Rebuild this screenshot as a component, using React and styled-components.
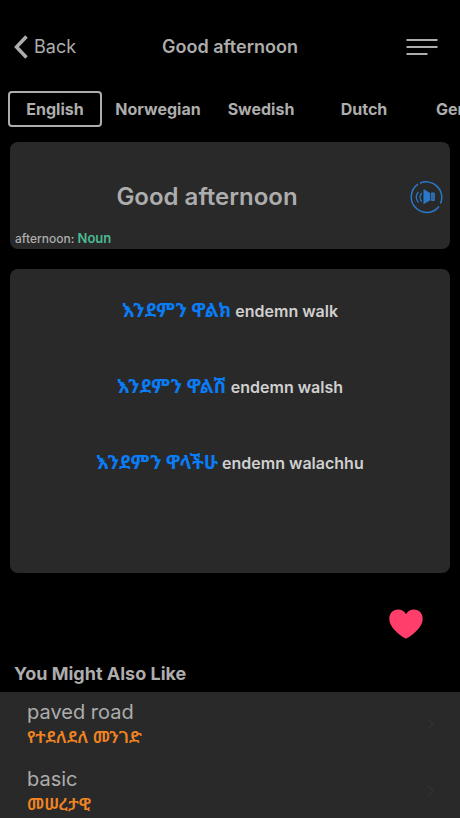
import React, { useState } from "react"
import styled, { createGlobalStyle } from "styled-components"

const languages = ["English", "Norwegian", "Swedish", "Dutch", "German"]

const phrases = [
  { amharic: "እንደምን ዋልክ", latin: "endemn walk" },
  { amharic: "እንደምን ዋልሽ", latin: "endemn walsh" },
  { amharic: "እንደምን ዋላችሁ", latin: "endemn walachhu" },
]

const suggestions = [
  { word: "paved road", amharic: "የተደለደለ መንገድ" },
  { word: "basic", amharic: "መሠረታዊ" },
]

const App = () => {
  const [language, setLanguage] = useState("English")

  return (
    <>
      <GlobalStyle />
      <Screen>
        <Header>
          <BackButton type="button">
            <svg width="14" height="24" viewBox="0 0 14 24" fill="none" aria-hidden="true">
              <path d="M12.500 1.500L2.500 12l10 10.500" stroke="currentColor" strokeWidth="3.500" />
            </svg>
            Back
          </BackButton>
          <HeaderTitle>Good afternoon</HeaderTitle>
          <MenuButton type="button" aria-label="Menu">
            <svg width="32" height="18" viewBox="0 0 32 18" aria-hidden="true">
              <path d="M0.500 2h31M0.500 9h31M0.500 16h21" stroke="currentColor" strokeWidth="2" />
            </svg>
          </MenuButton>
        </Header>

        <Languages>
          {languages.map((item) => (
            <LanguageTab
              key={item}
              type="button"
              $active={item === language}
              aria-pressed={item === language}
              onClick={() => setLanguage(item)}
            >
              {item}
            </LanguageTab>
          ))}
        </Languages>

        <WordCard>
          <WordRow>
            <Word>Good afternoon</Word>
            <SoundButton type="button" aria-label="Listen">
              <svg width="34" height="34" viewBox="0 0 34 34" fill="none" aria-hidden="true">
                <g stroke="currentColor">
                  <path d="M11 3.200A15.500 15.500 0 0 1 31.500 23.500M30 26.500A15.500 15.500 0 1 1 9 4.200" strokeWidth="1.500" />
                  <path d="M9.500 12C6.500 14.500 6.500 19.500 9.500 22.500" strokeWidth="1.300" />
                  <path d="M12.800 13C10.500 15.500 10.500 19 12.800 21.500" strokeWidth="1.300" />
                </g>
                <path d="M14.500 9L21 13V20.500L14.500 24.300z" fill="currentColor" />
                <path d="M22.300 13h3v7.500h-3z" fill="currentColor" fillOpacity="0.800" stroke="currentColor" />
              </svg>
            </SoundButton>
          </WordRow>
          <WordType>
            afternoon: <Noun>Noun</Noun>
          </WordType>
        </WordCard>

        <PhraseCard>
          {phrases.map((item) => (
            <Phrase key={item.latin}>
              <Amharic lang="am">{item.amharic}</Amharic> {item.latin}
            </Phrase>
          ))}
        </PhraseCard>

        <Actions>
          <LikeButton type="button" aria-label="Favourite">
            <svg width="34" height="30" viewBox="0 0 34 30" aria-hidden="true">
              <path
                d="M17 29.500C15.500 29.500 0.300 20 0.300 9.700C0.300 4.300 4.100 0.500 9 0.500C12.600 0.500 15.500 2.400 17 5.200C18.500 2.400 21.400 0.500 25 0.500C29.900 0.500 33.700 4.300 33.700 9.700C33.700 20 18.500 29.500 17 29.500z"
                fill="currentColor"
              />
            </svg>
          </LikeButton>
        </Actions>

        <SectionTitle>You Might Also Like</SectionTitle>
        <List>
          {suggestions.map((item) => (
            <ListItem key={item.word}>
              <ListLink href="#">
                <div>
                  <ListWord>{item.word}</ListWord>
                  <ListAmharic lang="am">{item.amharic}</ListAmharic>
                </div>
                <svg width="7" height="12" viewBox="0 0 7 12" fill="none" aria-hidden="true">
                  <path d="M1 1l5 5-5 5" stroke="#313132" strokeWidth="1.500" />
                </svg>
              </ListLink>
            </ListItem>
          ))}
        </List>
      </Screen>
    </>
  )
}

export default App

const GlobalStyle = createGlobalStyle`
  * {
    box-sizing: border-box;
  }

  body {
    margin: 0;
    background: #000;
    color: #adadad;
    font-family: Inter, "Noto Sans Ethiopic", "Abyssinica SIL", "Noto Sans", sans-serif;
  }

  button {
    padding: 0;
    border: none;
    background: none;
    color: inherit;
    font: inherit;
    cursor: pointer;
  }

  svg {
    display: block;
  }
`

const Screen = styled.main`
  height: 100vh;
  display: flex;
  flex-direction: column;
  overflow: hidden;
`

const Header = styled.header`
  display: grid;
  grid-template-columns: 1fr auto 1fr;
  align-items: center;
  padding: 32px 14px 0;
  line-height: 30px;
`

const BackButton = styled.button`
  display: flex;
  align-items: center;
  justify-self: start;
  gap: 6px;
  font-size: 18px;
`

const HeaderTitle = styled.h1`
  margin: 0;
  font-size: 18px;
  font-weight: 600;
`

const MenuButton = styled.button`
  justify-self: end;
  padding-right: 8px;
`

const Languages = styled.nav`
  flex-shrink: 0;
  display: flex;
  gap: 9px;
  margin-top: 29px;
  padding-left: 8px;
  overflow-x: auto;
  scrollbar-width: none;
`

const LanguageTab = styled.button`
  flex: 0 0 94px;
  height: 36px;
  border: 2px solid ${({ $active }) => ($active ? "#adadad" : "transparent")};
  border-radius: 4px;
  font-size: 16px;
  font-weight: 700;
  display: flex;
  align-items: center;
  justify-content: center;
`

const Card = styled.section`
  flex-shrink: 0;
  margin: 0 10px;
  border-radius: 8px;
  background: #292929;
`

const WordCard = styled(Card)`
  margin-top: 15px;
  padding: 38px 7px 0 5px;
`

const WordRow = styled.div`
  display: grid;
  grid-template-columns: 1fr 34px;
  column-gap: 10px;
  align-items: center;
`

const Word = styled.h2`
  margin: 0;
  font-size: 24px;
  font-weight: 600;
  line-height: 32px;
  text-align: center;
`

const SoundButton = styled.button`
  color: #2a78c8;
`

const WordType = styled.p`
  margin: 14px 0 0;
  font-size: 12px;
  font-weight: 500;
  line-height: 20px;
`

const Noun = styled.span`
  color: #4cb992;
  font-size: 13px;
  font-weight: 600;
`

const PhraseCard = styled(Card)`
  display: flex;
  flex-direction: column;
  gap: 52px;
  margin-top: 20px;
  padding: 30px 10px 98px;
`

const Phrase = styled.p`
  margin: 0;
  color: #d0d0d0;
  font-size: 16px;
  font-weight: 600;
  line-height: 24px;
  text-align: center;
`

const Amharic = styled.span`
  color: #0a7cf5;
  font-size: 19px;
  font-weight: 700;
`

const Actions = styled.div`
  display: flex;
  justify-content: flex-end;
  padding: 36px 37px 0;
`

const LikeButton = styled.button`
  color: #ff3e6c;
`

const SectionTitle = styled.h2`
  margin: 21px 0 0 14px;
  padding-bottom: 4px;
  font-size: 18px;
  font-weight: 700;
  line-height: 28px;
`

const List = styled.ul`
  flex: 1;
  min-height: 0;
  margin: 0;
  padding: 0;
  list-style: none;
  background: #292929;
  overflow-y: auto;
  scrollbar-width: none;
`

const ListItem = styled.li`
  height: 67px;
`

const ListLink = styled.a`
  display: flex;
  align-items: center;
  justify-content: space-between;
  padding: 7px 26px 8px 27px;
  color: inherit;
  text-decoration: none;
`

const ListWord = styled.div`
  font-size: 20px;
  line-height: 26px;
`

const ListAmharic = styled.div`
  color: #f08422;
  font-size: 17px;
  font-weight: 600;
  line-height: 24px;
`
